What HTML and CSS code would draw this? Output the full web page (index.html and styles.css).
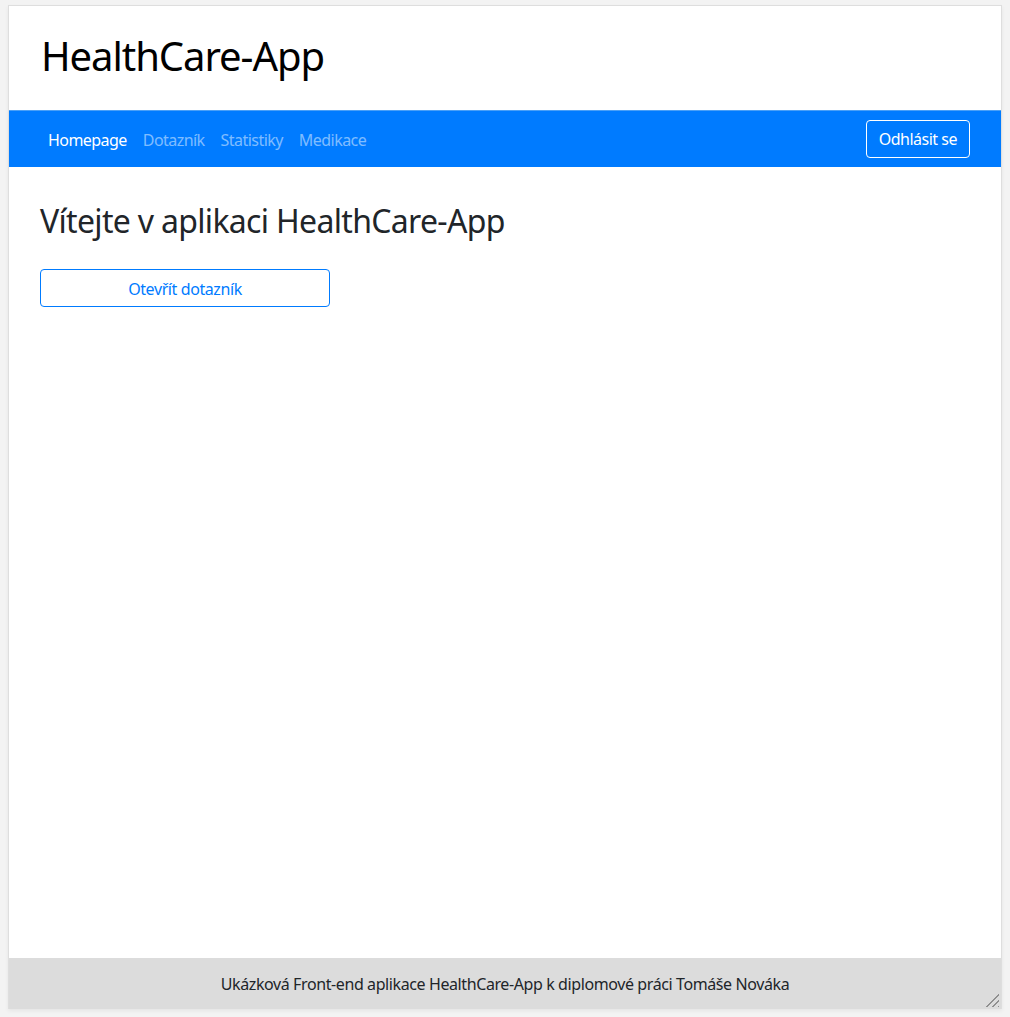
FILE: index.html
```html
<!DOCTYPE html>
<html lang="cs">
<head>
<meta charset="utf-8">
<title>HealthCare-App</title>
<link rel="stylesheet" href="styles.css">
</head>
<body>
<div class="frame">
  <header class="app-header">
    <h1 class="app-title">HealthCare-App</h1>
  </header>
  <nav class="navbar">
    <div class="navbar-inner">
      <ul class="nav">
        <li><a class="nav-link active" href="#">Homepage</a></li>
        <li><a class="nav-link" href="#">Dotazník</a></li>
        <li><a class="nav-link" href="#">Statistiky</a></li>
        <li><a class="nav-link" href="#">Medikace</a></li>
      </ul>
      <button class="btn-logout" type="button">Odhlásit se</button>
    </div>
  </nav>
  <main class="content">
    <h2 class="welcome">Vítejte v aplikaci HealthCare-App</h2>
    <button class="btn-outline" type="button">Otevřít dotazník</button>
  </main>
  <footer class="footer">
    Ukázková Front-end aplikace HealthCare-App k diplomové práci Tomáše Nováka
    <span class="resize-handle"></span>
  </footer>
</div>
</body>
</html>
```

FILE: styles.css
```css
* { box-sizing: border-box; }
html, body { height: 100%; }
body {
  margin: 0;
  padding: 5px 8px 8px 8px;
  background: #f3f3f3;
  font-family: "Noto Sans", "Open Sans", sans-serif;
  color: #212529;
}
.frame {
  height: 100%;
  display: flex;
  flex-direction: column;
  background: #fff;
  border: 1px solid #dedede;
  border-bottom: none;
  box-shadow: 0 2px 4px rgba(0,0,0,0.06);
}
.app-header {
  height: 104px;
  padding: 0 32px 6px;
  display: flex;
  align-items: center;
}
.app-title {
  margin: 0;
  font-size: 40px;
  font-weight: 400;
  color: #000;
  letter-spacing: -1.05px;
}
.navbar {
  background: #007bff;
  border-top: 1px solid #4aa0f7;
  height: 57px;
  padding: 0 16px;
}
.navbar-inner {
  height: 100%;
  padding: 0 15px;
  display: flex;
  align-items: center;
  justify-content: space-between;
}
.nav {
  list-style: none;
  margin: 0;
  padding: 0;
  display: flex;
}
.nav-link {
  display: block;
  padding: 9px 8px 7px;
  font-size: 16px;
  text-decoration: none;
  color: rgba(255,255,255,0.5);
  letter-spacing: -0.55px;
}
.nav-link.active { color: #fff; }
.btn-logout {
  font-family: inherit;
  font-size: 16px;
  color: #fff;
  background: transparent;
  border: 1px solid #fff;
  border-radius: 4px;
  height: 38px;
  padding: 0 12px;
  letter-spacing: -0.5px;
}
.content {
  flex: 1;
  padding: 0 31px;
}
.welcome {
  margin: 35px 0 29px;
  font-size: 32px;
  font-weight: 400;
  line-height: 1.2;
  letter-spacing: -0.68px;
}
.btn-outline {
  font-family: inherit;
  width: 290px;
  height: 38px;
  font-size: 16px;
  color: #007bff;
  background: #fff;
  border: 1px solid #007bff;
  border-radius: 4px;
  letter-spacing: -0.4px;
  padding-top: 2px;
}
.footer {
  position: relative;
  height: 51px;
  background: #dcdcdc;
  display: flex;
  align-items: center;
  justify-content: center;
  font-size: 16px;
  color: #212529;
  letter-spacing: -0.4px;
}
.resize-handle {
  position: absolute;
  right: 2px;
  bottom: 2px;
  width: 14px;
  height: 14px;
  background: repeating-linear-gradient(135deg, transparent 0 2.5px, #8f8f8f 2.5px 4px);
  clip-path: polygon(100% 0, 100% 100%, 0 100%);
}
```
